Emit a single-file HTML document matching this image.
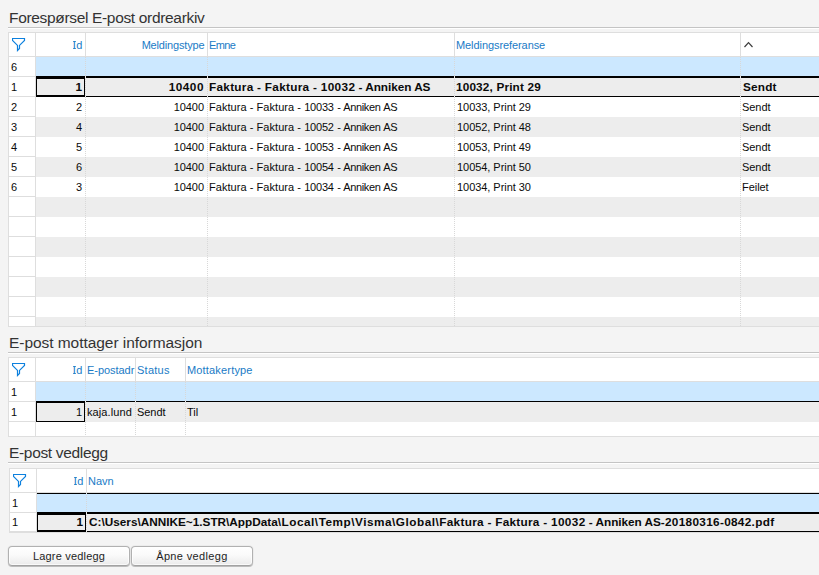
<!DOCTYPE html>
<html><head><meta charset="utf-8"><title>E-post ordrearkiv</title>
<style>
html,body{margin:0;padding:0}
body{width:819px;height:575px;overflow:hidden;background:#f4f4f4;position:relative;font-family:"Liberation Sans",sans-serif;font-size:11px;color:#0a0a0a}
.title{position:absolute;left:9px;font-size:15.5px;letter-spacing:-0.33px;color:#333;white-space:nowrap;height:22px;line-height:22px}
.hline{position:absolute;left:8px;right:0;height:1px;background:#c4c4c4;box-shadow:0 1px 0 #fff}
.grid{position:absolute;width:860px;border:1px solid #dedede;background:#fff;box-sizing:border-box;overflow:hidden}
.grid>div,.grid>svg{position:absolute}
.hl{height:1px;background:#dedede}
.vl{width:1px;background:#dedede}
.vd{width:1px;background-image:linear-gradient(#d8d8d8 50%,transparent 50%);background-size:1px 2px}
.bk{background:#000}
.vp{width:1px;background:#e9e9e9}
.fc{border:1px solid #000;box-sizing:border-box}
.hc{color:#1a7bc6;white-space:nowrap;overflow:hidden;box-sizing:border-box;padding:0 2.6px 0 1px;letter-spacing:-0.05px}
.dc{white-space:nowrap;overflow:hidden;box-sizing:border-box;padding:0 3px 0 1px;letter-spacing:-0.05px}
.I{position:relative;letter-spacing:.4px}
.I::before,.I::after{content:"";position:absolute;left:-.2px;width:3.6px;height:1px;background:currentColor;opacity:.75}
.I::before{top:2px}
.I::after{top:9px}
.r{text-align:right}
.l{text-align:left}
.bx{font-weight:bold;display:inline-block;transform:scaleX(1.07);letter-spacing:0}
.bx.l{transform-origin:0 50%}
.bx.r{transform-origin:100% 50%}
.rn{left:2px;width:22px;height:20px;white-space:nowrap}
.btn{position:absolute;top:546px;height:20px;width:122px;box-sizing:border-box;border:1px solid #b1b1b1;border-bottom-color:#a2a2a2;border-radius:4px;background:linear-gradient(#ffffff,#fafafa 45%,#ebebeb);text-align:center;line-height:18px;box-shadow:0 1px 0 rgba(0,0,0,.2),0 0 0 1px rgba(0,0,0,.03),inset 0 0 0 1px rgba(255,255,255,.7);font-size:11px;color:#1e1e1e;white-space:nowrap}
</style></head><body>

<div class="title" style="top:7px;letter-spacing:-0.33px">Forespørsel E-post ordrearkiv</div>
<div class="hline" style="top:27px"></div>
<div class="grid" style="left:8px;top:32px;height:295px">
<div class="hl" style="left:0;right:0;top:23px"></div>
<div class="vl" style="left:76px;top:0;height:23px"></div>
<div class="vl" style="left:198px;top:0;height:23px"></div>
<div class="vl" style="left:445px;top:0;height:23px"></div>
<div class="vl" style="left:731px;top:0;height:23px"></div>
<svg style="left:3px;top:5px" width="14" height="14" viewBox="0 0 14 14"><path d="M0.5 0.5 H12.5 V2.4 L7.5 7.4 V10.5 L5.5 12.5 V7.4 L0.5 2.4 Z" fill="none" stroke="#0c80de" stroke-width="1.2" stroke-linejoin="miter"/></svg>
<div class="hc r" style="left:27px;width:49px;top:1px;height:23px;line-height:23px"><span class="I">I</span>d</div>
<div class="hc r" style="left:77px;width:121px;top:1px;height:23px;line-height:23px"><span style="letter-spacing:-0.17px">Meldingstype</span></div>
<div class="hc l" style="left:199px;width:246px;top:1px;height:23px;line-height:23px"><span style="letter-spacing:-0.6px">Emne</span></div>
<div class="hc l" style="left:446px;width:285px;top:1px;height:23px;line-height:23px"><span style="letter-spacing:-0.08px">Meldingsreferanse</span></div>
<svg style="left:735px;top:8px" width="10" height="7" viewBox="0 0 10 7"><path d="M0.5 6 L4.5 1.7 L8.5 6" fill="none" stroke="#3c3c3c" stroke-width="1.2"/></svg>
<div style="left:27px;right:0;top:24px;height:20px;background:#cce8ff"></div>
<div class="hl" style="left:0;width:26px;top:43px"></div>
<div class="rn" style="top:24px;line-height:20px">6</div>
<div style="left:27px;right:0;top:44px;height:20px;background:#ededed"></div>
<div class="hl" style="left:0;width:26px;top:63px"></div>
<div class="rn" style="top:44px;line-height:20px">1</div>
<div class="dc r" style="left:27px;width:49px;top:44px;height:20px;line-height:20px"><span class="bx r">1</span></div>
<div class="dc r" style="left:77px;width:121px;top:44px;height:20px;line-height:20px"><span class="bx r"><span style="letter-spacing:0.48px">10400</span></span></div>
<div class="dc l" style="left:199px;width:246px;top:44px;height:20px;line-height:20px"><span class="bx l"><span style="letter-spacing:0.27px">Faktura - Faktura - </span><span style="letter-spacing:0.35px">10032</span><span style="letter-spacing:-0.04px"> - Anniken AS</span></span></div>
<div class="dc l" style="left:446px;width:285px;top:44px;height:20px;line-height:20px"><span class="bx l"><span style="letter-spacing:0.15px">10032, Print 29</span></span></div>
<div class="dc l" style="left:732px;width:108px;top:44px;height:20px;line-height:20px"><span class="bx l"><span style="margin-left:1px;letter-spacing:.15px">Sendt</span></span></div>
<div class="bk" style="left:27px;right:0;top:43px;height:2px"></div>
<div class="bk" style="left:27px;right:0;top:63px;height:1px"></div>
<div class="fc" style="left:27px;width:49px;top:45px;height:18px"></div>
<div style="left:27px;right:0;top:64px;height:20px;background:#fff"></div>
<div class="hl" style="left:0;width:26px;top:83px"></div>
<div class="rn" style="top:64px;line-height:20px">2</div>
<div class="dc r" style="left:27px;width:49px;top:64px;height:20px;line-height:20px">2</div>
<div class="dc r" style="left:77px;width:121px;top:64px;height:20px;line-height:20px">10400</div>
<div class="dc l" style="left:199px;width:246px;top:64px;height:20px;line-height:20px"><span style="letter-spacing:0.05px">Faktura - Faktura - </span><span style="letter-spacing:-0.2px">10033</span><span style="letter-spacing:-0.38px;word-spacing:0.8px"> - Anniken AS</span></div>
<div class="dc l" style="left:446px;width:285px;top:64px;height:20px;line-height:20px"><span style="margin-left:1px">10033, Print 29</span></div>
<div class="dc l" style="left:732px;width:108px;top:64px;height:20px;line-height:20px">Sendt</div>
<div style="left:27px;right:0;top:84px;height:20px;background:#ededed"></div>
<div class="hl" style="left:0;width:26px;top:103px"></div>
<div class="rn" style="top:84px;line-height:20px">3</div>
<div class="dc r" style="left:27px;width:49px;top:84px;height:20px;line-height:20px">4</div>
<div class="dc r" style="left:77px;width:121px;top:84px;height:20px;line-height:20px">10400</div>
<div class="dc l" style="left:199px;width:246px;top:84px;height:20px;line-height:20px"><span style="letter-spacing:0.05px">Faktura - Faktura - </span><span style="letter-spacing:-0.2px">10052</span><span style="letter-spacing:-0.38px;word-spacing:0.8px"> - Anniken AS</span></div>
<div class="dc l" style="left:446px;width:285px;top:84px;height:20px;line-height:20px"><span style="margin-left:1px">10052, Print 48</span></div>
<div class="dc l" style="left:732px;width:108px;top:84px;height:20px;line-height:20px">Sendt</div>
<div style="left:27px;right:0;top:104px;height:20px;background:#fff"></div>
<div class="hl" style="left:0;width:26px;top:123px"></div>
<div class="rn" style="top:104px;line-height:20px">4</div>
<div class="dc r" style="left:27px;width:49px;top:104px;height:20px;line-height:20px">5</div>
<div class="dc r" style="left:77px;width:121px;top:104px;height:20px;line-height:20px">10400</div>
<div class="dc l" style="left:199px;width:246px;top:104px;height:20px;line-height:20px"><span style="letter-spacing:0.05px">Faktura - Faktura - </span><span style="letter-spacing:-0.2px">10053</span><span style="letter-spacing:-0.38px;word-spacing:0.8px"> - Anniken AS</span></div>
<div class="dc l" style="left:446px;width:285px;top:104px;height:20px;line-height:20px"><span style="margin-left:1px">10053, Print 49</span></div>
<div class="dc l" style="left:732px;width:108px;top:104px;height:20px;line-height:20px">Sendt</div>
<div style="left:27px;right:0;top:124px;height:20px;background:#ededed"></div>
<div class="hl" style="left:0;width:26px;top:143px"></div>
<div class="rn" style="top:124px;line-height:20px">5</div>
<div class="dc r" style="left:27px;width:49px;top:124px;height:20px;line-height:20px">6</div>
<div class="dc r" style="left:77px;width:121px;top:124px;height:20px;line-height:20px">10400</div>
<div class="dc l" style="left:199px;width:246px;top:124px;height:20px;line-height:20px"><span style="letter-spacing:0.05px">Faktura - Faktura - </span><span style="letter-spacing:-0.2px">10054</span><span style="letter-spacing:-0.38px;word-spacing:0.8px"> - Anniken AS</span></div>
<div class="dc l" style="left:446px;width:285px;top:124px;height:20px;line-height:20px"><span style="margin-left:1px">10054, Print 50</span></div>
<div class="dc l" style="left:732px;width:108px;top:124px;height:20px;line-height:20px">Sendt</div>
<div style="left:27px;right:0;top:144px;height:20px;background:#fff"></div>
<div class="hl" style="left:0;width:26px;top:163px"></div>
<div class="rn" style="top:144px;line-height:20px">6</div>
<div class="dc r" style="left:27px;width:49px;top:144px;height:20px;line-height:20px">3</div>
<div class="dc r" style="left:77px;width:121px;top:144px;height:20px;line-height:20px">10400</div>
<div class="dc l" style="left:199px;width:246px;top:144px;height:20px;line-height:20px"><span style="letter-spacing:0.05px">Faktura - Faktura - </span><span style="letter-spacing:-0.2px">10034</span><span style="letter-spacing:-0.38px;word-spacing:0.8px"> - Anniken AS</span></div>
<div class="dc l" style="left:446px;width:285px;top:144px;height:20px;line-height:20px"><span style="margin-left:1px">10034, Print 30</span></div>
<div class="dc l" style="left:732px;width:108px;top:144px;height:20px;line-height:20px">Feilet</div>
<div style="left:27px;right:0;top:164px;height:20px;background:#ededed"></div>
<div class="hl" style="left:0;width:26px;top:183px"></div>
<div style="left:27px;right:0;top:184px;height:20px;background:#fff"></div>
<div class="hl" style="left:0;width:26px;top:203px"></div>
<div style="left:27px;right:0;top:204px;height:20px;background:#ededed"></div>
<div class="hl" style="left:0;width:26px;top:223px"></div>
<div style="left:27px;right:0;top:224px;height:20px;background:#fff"></div>
<div class="hl" style="left:0;width:26px;top:243px"></div>
<div style="left:27px;right:0;top:244px;height:20px;background:#ededed"></div>
<div class="hl" style="left:0;width:26px;top:263px"></div>
<div style="left:27px;right:0;top:264px;height:20px;background:#fff"></div>
<div class="hl" style="left:0;width:26px;top:283px"></div>
<div style="left:27px;right:0;top:284px;height:9px;background:#ededed"></div>
<div class="vd" style="left:76px;top:24px;bottom:0"></div>
<div class="vd" style="left:198px;top:24px;bottom:0"></div>
<div class="vd" style="left:445px;top:24px;bottom:0"></div>
<div class="vd" style="left:731px;top:24px;bottom:0"></div>
<div class="vp" style="left:76px;top:43px;height:2px"></div>
<div class="vp" style="left:76px;top:63px;height:1px"></div>
<div class="vp" style="left:198px;top:43px;height:2px"></div>
<div class="vp" style="left:198px;top:63px;height:1px"></div>
<div class="vp" style="left:445px;top:43px;height:2px"></div>
<div class="vp" style="left:445px;top:63px;height:1px"></div>
<div class="vp" style="left:731px;top:43px;height:2px"></div>
<div class="vp" style="left:731px;top:63px;height:1px"></div>
<div class="vl" style="left:26px;top:0;bottom:0"></div>
</div>
<div class="title" style="top:332px;letter-spacing:-0.05px">E-post mottager informasjon</div>
<div class="hline" style="top:352px"></div>
<div class="grid" style="left:8px;top:357px;height:80px">
<div class="hl" style="left:0;right:0;top:23px"></div>
<div class="vl" style="left:76px;top:0;height:23px"></div>
<div class="vl" style="left:126px;top:0;height:23px"></div>
<div class="vl" style="left:176px;top:0;height:23px"></div>
<svg style="left:3px;top:5px" width="14" height="14" viewBox="0 0 14 14"><path d="M0.5 0.5 H12.5 V2.4 L7.5 7.4 V10.5 L5.5 12.5 V7.4 L0.5 2.4 Z" fill="none" stroke="#0c80de" stroke-width="1.2" stroke-linejoin="miter"/></svg>
<div class="hc r" style="left:27px;width:49px;top:1px;height:23px;line-height:23px"><span class="I">I</span>d</div>
<div class="hc l" style="left:77px;width:49px;top:1px;height:23px;line-height:23px">E-postadr</div>
<div class="hc l" style="left:127px;width:49px;top:1px;height:23px;line-height:23px"><span style="letter-spacing:0.25px">Status</span></div>
<div class="hc l" style="left:177px;width:663px;top:1px;height:23px;line-height:23px"><span style="letter-spacing:0.17px">Mottakertype</span></div>
<div style="left:27px;right:0;top:24px;height:20px;background:#cce8ff"></div>
<div class="hl" style="left:0;width:26px;top:43px"></div>
<div class="rn" style="top:24px;line-height:20px">1</div>
<div style="left:27px;right:0;top:44px;height:20px;background:#ededed"></div>
<div class="hl" style="left:0;width:26px;top:63px"></div>
<div class="rn" style="top:44px;line-height:20px">1</div>
<div class="dc r" style="left:27px;width:49px;top:44px;height:20px;line-height:20px">1</div>
<div class="dc l" style="left:77px;width:49px;top:44px;height:20px;line-height:20px"><span style="letter-spacing:0.1px">kaja.lund</span></div>
<div class="dc l" style="left:127px;width:49px;top:44px;height:20px;line-height:20px">Sendt</div>
<div class="dc l" style="left:177px;width:663px;top:44px;height:20px;line-height:20px">Til</div>
<div class="bk" style="left:27px;right:0;top:43px;height:1px"></div>
<div class="fc" style="left:27px;width:49px;top:44px;height:20px"></div>
<div style="left:27px;right:0;top:64px;height:14px;background:#fff"></div>
<div class="vd" style="left:76px;top:24px;bottom:0"></div>
<div class="vd" style="left:126px;top:24px;bottom:0"></div>
<div class="vd" style="left:176px;top:24px;bottom:0"></div>
<div class="vp" style="left:76px;top:43px;height:1px"></div>
<div class="vp" style="left:126px;top:43px;height:1px"></div>
<div class="vp" style="left:176px;top:43px;height:1px"></div>
<div class="vl" style="left:26px;top:0;bottom:0"></div>
</div>
<div class="title" style="top:442px;letter-spacing:-0.33px">E-post vedlegg</div>
<div class="hline" style="top:462px"></div>
<div class="grid" style="left:9px;top:468px;height:65px">
<div class="hl" style="left:0;right:0;top:23px"></div>
<div class="vl" style="left:76px;top:0;height:23px"></div>
<svg style="left:3px;top:5px" width="14" height="14" viewBox="0 0 14 14"><path d="M0.5 0.5 H12.5 V2.4 L7.5 7.4 V10.5 L5.5 12.5 V7.4 L0.5 2.4 Z" fill="none" stroke="#0c80de" stroke-width="1.2" stroke-linejoin="miter"/></svg>
<div class="hc r" style="left:27px;width:49px;top:1px;height:23px;line-height:23px"><span class="I">I</span>d</div>
<div class="hc l" style="left:77px;width:762px;top:1px;height:23px;line-height:23px">Navn</div>
<div style="left:27px;right:0;top:24px;height:20px;background:#cce8ff"></div>
<div class="hl" style="left:0;width:26px;top:43px"></div>
<div class="rn" style="top:24px;line-height:20px">1</div>
<div class="bk" style="left:27px;right:0;top:24px;height:1px"></div>
<div style="left:27px;right:0;top:44px;height:19px;background:#ededed"></div>
<div class="hl" style="left:0;width:26px;top:62px"></div>
<div class="rn" style="top:44px;line-height:18px">1</div>
<div class="dc r" style="left:27px;width:49px;top:44px;height:19px;line-height:18px"><span class="bx r">1</span></div>
<div class="dc l" style="left:77px;width:762px;top:44px;height:19px;line-height:18px"><span class="bx l"><span style="margin-left:1px">C:\Users\ANNIKE~1.STR\AppData</span><span style="letter-spacing:0.48px">\Local\Temp\Visma\Global\</span><span style="letter-spacing:0.27px">Faktura - Faktura - </span><span style="letter-spacing:0.35px">10032</span><span style="letter-spacing:-0.04px"> - Anniken AS</span><span style="letter-spacing:0.3px">-20180316-0842.pdf</span></span></div>
<div class="bk" style="left:27px;right:0;top:43px;height:2px"></div>
<div class="bk" style="left:27px;right:0;top:62px;height:1px"></div>
<div class="fc" style="left:27px;width:49px;top:45px;height:17px"></div>
<div class="vd" style="left:76px;top:24px;bottom:0"></div>
<div class="vp" style="left:76px;top:43px;height:2px"></div>
<div class="vp" style="left:76px;top:62px;height:1px"></div>
<div class="vp" style="left:76px;top:24px;height:1px"></div>
<div class="vl" style="left:26px;top:0;bottom:0"></div>
</div>
<div class="btn" style="left:8px;letter-spacing:.18px">Lagre vedlegg</div>
<div class="btn" style="left:131px;letter-spacing:.36px">Åpne vedlegg</div>
</body></html>
